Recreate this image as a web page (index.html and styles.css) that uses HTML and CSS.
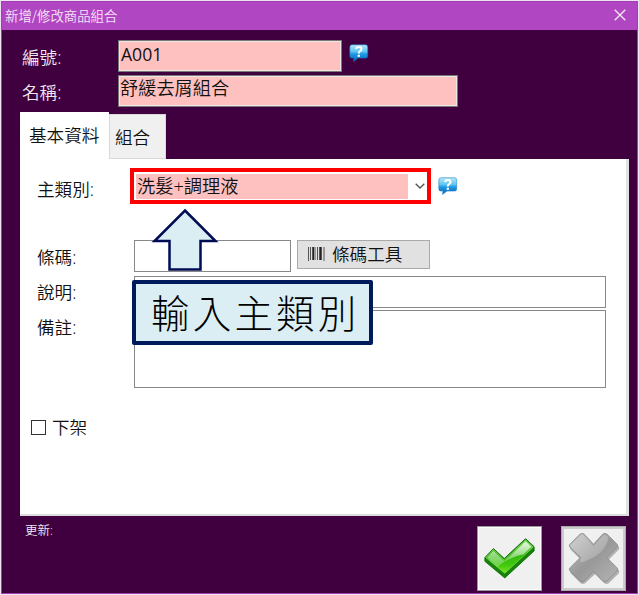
FILE: index.html
```html
<!DOCTYPE html>
<html lang="zh-Hant">
<head>
    <meta charset="UTF-8">
    <meta name="viewport" content="width=device-width, initial-scale=1.0">
    <title>新增/修改商品組合</title>
    <link rel="stylesheet" href="styles.css">
</head>
<body>
    <!-- Shared icon -->
    <svg class="defs" width="0" height="0">
        <defs>
            <linearGradient id="bubbleFill" x1="0" y1="0" x2="0" y2="1">
                <stop offset="0" stop-color="#b4e8fb"/>
                <stop offset="0.42" stop-color="#5cc4f0"/>
                <stop offset="0.55" stop-color="#1f98e2"/>
                <stop offset="1" stop-color="#0868c4"/>
            </linearGradient>
            <symbol id="help" viewBox="0 0 20 18">
                <path d="M3 .7h13.500q2.200 0 2.200 2.200v9q0 2.200-2.200 2.200H9L4.500 17.500 5 14.100H3Q.8 14.100.8 11.900v-9Q.8.700 3 .700z" fill="url(#bubbleFill)" stroke="#1474bd" stroke-width=".5"/>
                <path d="M7.100 5.200Q7.300 2.900 9.800 2.900q2.700 0 2.700 2.200 0 1.300-1.400 2.100T9.800 9.500" fill="none" stroke="#fff" stroke-width="2"/>
                <rect x="8.700" y="10.700" width="2.200" height="2.200" fill="#fff"/>
            </symbol>
        </defs>
    </svg>

    <div class="window">
        <div class="titlebar">
            <span class="title">新增/修改商品組合</span>
            <svg class="close" viewBox="0 0 12 12"><path d="M.7.7l10.600 10.600M11.300.7L.7 11.300"/></svg>
        </div>

        <div class="header">
            <div class="row">
                <label class="label">編號:</label>
                <div class="field code">A001</div>
                <svg class="help"><use href="#help"/></svg>
            </div>
            <div class="row">
                <label class="label">名稱:</label>
                <div class="field name">舒緩去屑組合</div>
            </div>
        </div>

        <div class="tabs">
            <div class="tab active">基本資料</div>
            <div class="tab">組合</div>
        </div>

        <div class="panel">
            <div class="row category">
                <label class="label">主類別:</label>
                <div class="select">
                    <span class="value">洗髮+調理液</span>
                    <svg class="arrow" viewBox="0 0 10 6"><path d="M.7.7L5 5 9.300.7"/></svg>
                </div>
                <svg class="help"><use href="#help"/></svg>
            </div>
            <div class="row barcode">
                <label class="label">條碼:</label>
                <div class="input"></div>
                <div class="button">
                    <svg class="bars" viewBox="0 0 17 14">
                        <path d="M.5 0v14M2.500 0v13M4.500 0v13M7 0v13M9.500 0v13M11.500 0v13M13.500 0v13M16 0v14" stroke="#555"/>
                        <path d="M5.500 0v13M12.500 0v13" stroke="#222"/>
                    </svg>
                    <span>條碼工具</span>
                </div>
            </div>
            <div class="row desc">
                <label class="label">說明:</label>
                <div class="input wide"></div>
            </div>
            <div class="row memo">
                <label class="label">備註:</label>
                <div class="input area"></div>
            </div>
            <div class="check">
                <span class="box"></span>
                <span>下架</span>
            </div>

            <!-- Hint over the form -->
            <svg class="pointer" viewBox="0 0 68 64"><path d="M34 2.500L64.500 33H49.500V61.500H18.500V33H3.500z"/></svg>
            <div class="hint">輸入主類別</div>
        </div>

        <div class="footer">
            <span class="updated">更新:</span>
            <div class="action">
                <svg viewBox="0 0 56 56">
                    <defs>
                        <linearGradient id="ok" x1="0" y1="0" x2="0" y2="1">
                            <stop offset="0" stop-color="#7ed85c"/>
                            <stop offset="0.45" stop-color="#35b811"/>
                            <stop offset="0.75" stop-color="#3fc80c"/>
                            <stop offset="1" stop-color="#79e51c"/>
                        </linearGradient>
                        <linearGradient id="okShine" x1="0" y1="0" x2="0" y2="1">
                            <stop offset="0" stop-color="#fff" stop-opacity=".8"/>
                            <stop offset="1" stop-color="#fff" stop-opacity=".2"/>
                        </linearGradient>
                    </defs>
                    <path d="M2 27L11 17.500 22.500 28 45 7l9 8.500V20L23 48.500 2 31z" fill="#168407" stroke="#137006"/>
                    <path d="M3 27L11 18.500 22.500 29.500 45 8.500l8 7.500L23 43.500z" fill="url(#ok)" stroke="#86dc65" stroke-width=".8"/>
                    <path d="M4.500 27L11 20l11.500 11L45 10l6 5.500-8 8Q28 26 15 37z" fill="url(#okShine)"/>
                </svg>
            </div>
            <div class="action cancel">
                <svg viewBox="0 0 56 56">
                    <defs>
                        <linearGradient id="no" x1="0" y1="0" x2="1" y2="1">
                            <stop offset="0" stop-color="#c4c4c4"/>
                            <stop offset="0.5" stop-color="#989898"/>
                            <stop offset="1" stop-color="#b4b4b4"/>
                        </linearGradient>
                    </defs>
                    <path d="M3 14L14 3q2-1 4 0L29 14 39 4q2-1.500 4 0L54 14q1 2 0 3L43 28 54 39q1 2 0 3L43 53q-2 1-4 0L29 43 18 53q-2 1-4 0L3 42q-1-2 0-3L14 28 3 17q-1-1 0-3z" transform="translate(.8 1.500)" fill="#858585" opacity=".6"/>
                    <path d="M3 13L14 2q2-1 4 0L28 13 38 2q2-1 4 0L53 13q1 2 0 3L42 27 53 38q1 2 0 3L42 52q-2 1-4 0L28 42 18 52q-2 1-4 0L3 41q-1-2 0-3L14 27 3 16q-1-1 0-3z" fill="url(#no)" stroke="#858585" stroke-width=".8"/>
                    <path d="M4 14L15 3h2l11 12L39 3h2l3 3Q40 25 15 32l-1-1 1-4L4 16z" fill="#fff" opacity=".22"/>
                </svg>
            </div>
        </div>
    </div>
</body>
</html>
```
FILE: styles.css
```css
/* General styles */
* {
    margin: 0;
    padding: 0;
    box-sizing: border-box;
}

body {
    width: 639px;
    height: 595px;
    padding: 1px;
    overflow: hidden;
    background-color: #f0e4f4;
    font-family: "Open Sans", "Noto Sans CJK TC", sans-serif;
    font-size: 17.6px;
    font-weight: 350;
    line-height: 24px;
    color: #111;
}

.defs {
    position: absolute;
}

.window {
    width: 637px;
    height: 593px;
    border: 1px solid #a040b0;
    background-color: #400040;
}

/* Title bar */
.titlebar {
    display: flex;
    justify-content: space-between;
    align-items: center;
    height: 28px;
    padding: 0 11px 2px 3px;
    background-color: #b146c2;
    color: #f5e4f7;
}

.title {
    font-family: "Noto Sans CJK TC", sans-serif;
    font-size: 13.4px;
}

.close {
    width: 12px;
    height: 12px;
    fill: none;
    stroke: #f5e4f7;
    stroke-width: 1.4;
}

/* Top fields */
.row {
    display: flex;
    align-items: flex-start;
}

.label {
    flex: none;
    white-space: nowrap;
}

.header {
    display: flex;
    flex-direction: column;
    gap: 3px;
    height: 82px;
    padding: 10px 0 0 20px;
}

.header .label {
    width: 96px;
    padding-top: 5px;
    color: #f0e8f0;
}

.field {
    height: 32px;
    padding: 1px 2px;
    border: 1px solid #777;
    box-shadow: inset 0 0 0 1px #efe6e6;
    background-color: #ffc0c0;
}

.code {
    width: 224px;
    font-weight: 400;
}

.name {
    width: 340px;
    padding-top: 0;
    padding-left: 1px;
    font-size: 18.2px;
}

.help {
    width: 20px;
    height: 18px;
    margin: 4px 0 0 7px;
}

/* Tabs */
.tabs {
    display: flex;
    align-items: flex-end;
    height: 47px;
    padding-left: 18px;
}

.tab {
    width: 57px;
    height: 45px;
    padding: 10px 0 0 5px;
    border: 1px solid #d9d9d9;
    background-color: #f0f0f0;
    white-space: nowrap;
}

.tab.active {
    width: 89px;
    height: 47px;
    padding: 11px 0 0 9px;
    border: none;
    background-color: #fff;
}

/* Form */
.panel {
    position: relative;
    width: 609px;
    height: 357px;
    margin-left: 18px;
    padding: 9px 0 0 17px;
    border-right: 3px solid #e2e2e2;
    border-bottom: 2px solid #ddd;
    background-color: #fff;
}

.panel .label {
    width: 97px;
}

.category {
    height: 72px;
}

.category .label {
    width: 93px;
    padding-top: 9px;
}

.select {
    display: flex;
    justify-content: space-between;
    align-items: center;
    width: 301px;
    height: 36px;
    padding: 2px;
    border: 4px solid #f00;
}

.value {
    width: 272px;
    height: 25px;
    padding-left: 1px;
    font-size: 18.200px;
    line-height: 24px;
    background-color: #ffc0c0;
}

.arrow {
    width: 10px;
    height: 6px;
    fill: none;
    stroke: #555;
    stroke-width: 1.4;
}

.category .help {
    margin-top: 9px;
}

.barcode {
    height: 36px;
}

.barcode .label,
.desc .label,
.memo .label {
    padding-top: 5px;
}

.input {
    width: 157px;
    height: 32px;
    border: 1px solid #888;
}

.button {
    display: flex;
    align-items: center;
    gap: 7px;
    width: 133px;
    height: 29px;
    margin-left: 6px;
    padding: 0 0 2px 10px;
    border: 1px solid #aaa;
    background-color: #e1e1e1;
}

.bars {
    width: 17px;
    height: 14px;
}

.desc {
    height: 34px;
}

.desc .label {
    padding-top: 4px;
}

.wide {
    width: 472px;
}

.memo {
    height: 105px;
}

.area {
    width: 472px;
    height: 78px;
}

.check {
    display: flex;
    align-items: center;
    gap: 6px;
    margin-left: -6px;
}

.box {
    width: 15px;
    height: 15px;
    border: 1px solid #333;
}

/* Hint */
.pointer {
    position: absolute;
    top: 49px;
    left: 131px;
    width: 68px;
    height: 64px;
    fill: #daeef3;
    stroke: #000c54;
    stroke-width: 2.5;
}

.hint {
    position: absolute;
    top: 121px;
    left: 112px;
    width: 241px;
    height: 65px;
    padding-left: 15px;
    border: 4px solid #001b5c;
    border-radius: 2px;
    background-color: #daeef3;
    color: #000;
    font-family: "Noto Sans CJK TC", sans-serif;
    font-size: 38.5px;
    font-weight: 300;
    letter-spacing: 3.2px;
    line-height: 54px;
    white-space: nowrap;
}

/* Footer */
.footer {
    display: flex;
    padding: 10px 0 0 24px;
}

.updated {
    width: 451px;
    margin: -7px 0 0 -1px;
    color: #f0e8f0;
    font-size: 12.5px;
}

.action {
    width: 65px;
    height: 65px;
    margin-left: 1px;
    padding: 5px;
    border: 1px solid #999;
    background-color: #f0f0f0;
    box-shadow: inset 0 0 0 1px #fff;
}

.action svg {
    display: block;
    width: 53px;
    height: 53px;
}

.cancel {
    margin-left: 19px;
    border-color: #aaa;
    box-shadow: inset 0 0 0 2px #ccc;
}
```
